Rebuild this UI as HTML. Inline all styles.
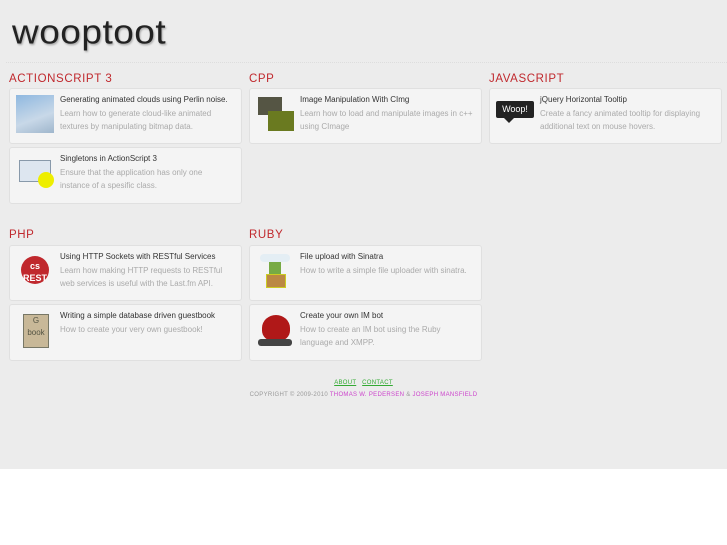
<!DOCTYPE html>
<html><head><style>
body{margin:0;width:727px;height:545px;background:#fff;font-family:"Liberation Sans","DejaVu Sans",sans-serif;position:relative;overflow:hidden}
#bg{position:absolute;left:0;top:0;width:727px;height:469px;background:#ececec}
.logo{position:absolute;left:12px;top:13px;font-size:37px;color:#222;letter-spacing:0.5px;font-family:"Liberation Sans",sans-serif;text-shadow:1px 2px 2px #aaa;transform:scaleY(0.92);transform-origin:top left}
.rule{position:absolute;left:6px;top:62px;width:721px;border-top:1px dotted #ddd}
h2{position:absolute;margin:0;font-size:11.5px;font-weight:normal;color:#c0282d;letter-spacing:0.6px}
.card{position:absolute;width:231px;height:54px;background:#f4f4f4;border:1px solid #e0e0e0;border-radius:3px}
.card .ic{position:absolute;left:6px;top:6px;width:38px;height:38px}
.card .t{position:absolute;left:50px;top:6px;font-size:8px;color:#333;white-space:nowrap}
.card .d{position:absolute;left:50px;top:19px;width:172px;font-size:8px;line-height:12.5px;color:#aaa}
.foot{position:absolute;left:0;width:727px;text-align:center;font-size:6px;letter-spacing:0.3px}
</style></head><body>
<div id="bg"></div>
<div class="logo">wooptoot</div>
<div class="rule"></div>

<h2 style="left:9px;top:73px">ACTIONSCRIPT 3</h2>
<h2 style="left:249px;top:73px">CPP</h2>
<h2 style="left:489px;top:73px">JAVASCRIPT</h2>
<h2 style="left:9px;top:229px">PHP</h2>
<h2 style="left:249px;top:229px">RUBY</h2>

<div class="card" style="left:9px;top:88px"><div class="ic" style="background:linear-gradient(160deg,#8fb8e0,#c8d8e8 60%,#9fb6cc)"></div><div class="t">Generating animated clouds using Perlin noise.</div><div class="d">Learn how to generate cloud-like animated textures by manipulating bitmap data.</div></div>
<div class="card" style="left:9px;top:147px;height:55px"><div class="ic"><div style="position:absolute;left:3px;top:6px;width:30px;height:20px;background:#dde6f0;border:1px solid #89a"></div><div style="position:absolute;left:22px;top:18px;width:16px;height:16px;border-radius:50%;background:#ee0"></div></div><div class="t">Singletons in ActionScript 3</div><div class="d">Ensure that the application has only one instance of a spesific class.</div></div>

<div class="card" style="left:249px;top:88px"><div class="ic"><div style="position:absolute;left:2px;top:2px;width:24px;height:18px;background:#554"></div><div style="position:absolute;left:12px;top:16px;width:26px;height:20px;background:#6a7a20"></div></div><div class="t">Image Manipulation With CImg</div><div class="d" style="width:185px">Learn how to load and manipulate images in c++ using CImage</div></div>

<div class="card" style="left:489px;top:88px"><div class="ic"><div style="position:absolute;left:0;top:6px;width:38px;height:17px;background:#222;border-radius:2px;color:#fff;font-size:9px;text-align:center;line-height:17px">Woop!</div><div style="position:absolute;left:8px;top:23px;border:5px solid transparent;border-top-color:#222"></div></div><div class="t">jQuery Horizontal Tooltip</div><div class="d">Create a fancy animated tooltip for displaying additional text on mouse hovers.</div></div>

<div class="card" style="left:9px;top:245px"><div class="ic"><div style="position:absolute;left:5px;top:4px;width:28px;height:28px;border-radius:50%;background:#c0282d;color:#fff;font-size:9px;font-weight:bold;text-align:center;line-height:12px;padding-top:4px;box-sizing:border-box">cs<br>REST</div></div><div class="t">Using HTTP Sockets with RESTful Services</div><div class="d">Learn how making HTTP requests to RESTful web services is useful with the Last.fm API.</div></div>
<div class="card" style="left:9px;top:304px;height:55px"><div class="ic"><div style="position:absolute;left:7px;top:3px;width:24px;height:32px;background:#c8b898;border:1px solid #776;color:#554;font-size:8px;text-align:center;line-height:12px">G<br>book</div></div><div class="t">Writing a simple database driven guestbook</div><div class="d">How to create your very own guestbook!</div></div>

<div class="card" style="left:249px;top:245px"><div class="ic"><div style="position:absolute;left:4px;top:2px;width:30px;height:8px;border-radius:5px;background:#e4eef4"></div><div style="position:absolute;left:13px;top:10px;width:12px;height:12px;background:#7a4"></div><div style="position:absolute;left:10px;top:22px;width:18px;height:12px;background:#b84;border:1px solid #cc2"></div></div><div class="t">File upload with Sinatra</div><div class="d" style="width:185px">How to write a simple file uploader with sinatra.</div></div>
<div class="card" style="left:249px;top:304px;height:55px"><div class="ic"><div style="position:absolute;left:6px;top:4px;width:28px;height:26px;border-radius:50% 50% 40% 40%;background:#b01818"></div><div style="position:absolute;left:2px;top:28px;width:34px;height:7px;background:#444;border-radius:3px"></div></div><div class="t">Create your own IM bot</div><div class="d" style="width:160px">How to create an IM bot using the Ruby language and XMPP.</div></div>

<div class="foot" style="top:380px"><span style="color:#3a3;text-decoration:underline">ABOUT</span> &nbsp; <span style="color:#3a3;text-decoration:underline">CONTACT</span></div>
<div class="foot" style="top:392px;color:#999">COPYRIGHT © 2009-2010 <span style="color:#c4c">THOMAS W. PEDERSEN</span> &amp; <span style="color:#c4c">JOSEPH MANSFIELD</span></div>
</body></html>
